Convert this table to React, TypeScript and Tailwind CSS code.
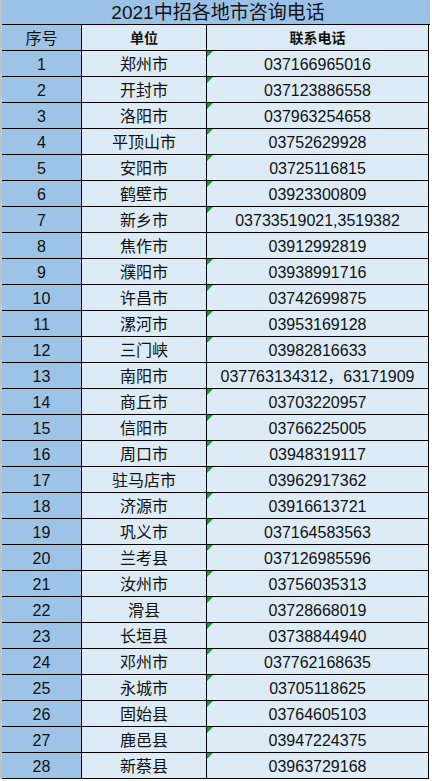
import React from "react";

const rows: [string, string, boolean][] = [
  ["郑州市", "037166965016", true],
  ["开封市", "037123886558", true],
  ["洛阳市", "037963254658", true],
  ["平顶山市", "03752629928", true],
  ["安阳市", "03725116815", true],
  ["鹤壁市", "03923300809", true],
  ["新乡市", "03733519021,3519382", true],
  ["焦作市", "03912992819", false],
  ["濮阳市", "03938991716", true],
  ["许昌市", "03742699875", true],
  ["漯河市", "03953169128", true],
  ["三门峡", "03982816633", true],
  ["南阳市", "037763134312，63171909", false],
  ["商丘市", "03703220957", true],
  ["信阳市", "03766225005", true],
  ["周口市", "03948319117", true],
  ["驻马店市", "03962917362", true],
  ["济源市", "03916613721", true],
  ["巩义市", "037164583563", true],
  ["兰考县", "037126985596", true],
  ["汝州市", "03756035313", true],
  ["滑县", "03728668019", true],
  ["长垣县", "03738844940", true],
  ["邓州市", "037762168635", true],
  ["永城市", "03705118625", true],
  ["固始县", "03764605103", true],
  ["鹿邑县", "03947224375", true],
  ["新蔡县", "03963729168", true],
];

const font = { fontFamily: '"Liberation Sans", Arial, "Noto Sans CJK SC", sans-serif' };

function Tri() {
  return (
    <svg className="absolute left-0 top-0" width="6" height="6" viewBox="0 0 6 6">
      <polygon points="0,0 6,0 0,6" fill="#1e9a2e" />
    </svg>
  );
}

export default function App() {
  return (
    <div className="w-[432px] h-[781px] bg-white flex text-[#111]" style={font}>
      <div className="w-[2px] h-[779px] bg-[#c4c4c4] shrink-0" />
      <div className="flex flex-col w-[430px]">
        <div className="h-[25px] w-[428px] bg-[#9bc2e6] border-b border-black flex items-center justify-center text-[19px] leading-none pl-[4px] pt-[1px]">
          2021中招各地市咨询电话
        </div>
        <div className="flex h-[26px] border-b border-black w-[427px]">
          <div className="w-[80px] bg-[#9dc3e6] border-r border-black flex items-center justify-center text-[16px] pt-[2px]">
            序号
          </div>
          <div className="w-[125px] bg-[#ddebf7] border-r border-black flex items-center justify-center text-[14px] font-bold pt-[2px]">
            单位
          </div>
          <div className="w-[222px] bg-[#ddebf7] border-r border-black flex items-center justify-center text-[14px] font-bold pt-[2px]">
            联系电话
          </div>
        </div>
        {rows.map(([city, phone, tri], i) => (
          <div key={i} className="flex h-[26px] border-b border-black w-[427px]">
            <div className="w-[80px] bg-[#9dc3e6] border-r border-black flex items-center justify-center text-[16px] pt-[3px]">
              {i + 1}
            </div>
            <div className="w-[125px] bg-[#ddebf7] border-r border-black flex items-center justify-center text-[16px] pt-[3px]">
              {city}
            </div>
            <div className="relative w-[222px] bg-[#ddebf7] border-r border-black flex items-center justify-center text-[16px] pt-[3px]">
              {tri && <Tri />}
              {phone}
            </div>
          </div>
        ))}
      </div>
    </div>
  );
}
